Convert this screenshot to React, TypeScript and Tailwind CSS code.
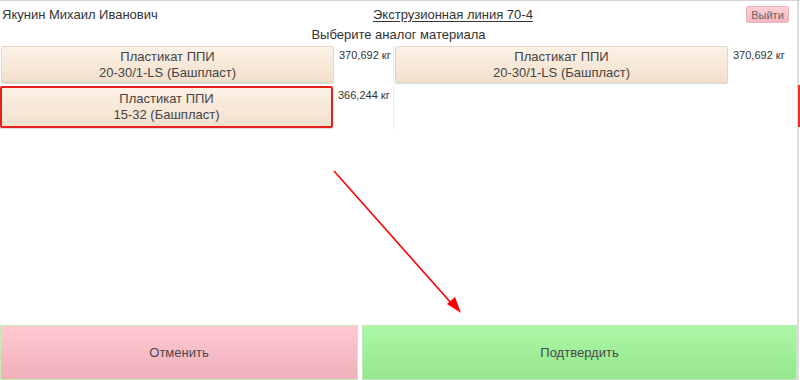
import React from 'react';

const materials = [
  { id: 1, name: 'Пластикат ППИ', grade: '20-30/1-LS (Башпласт)', weight: '370,692 кг', selected: false },
  { id: 2, name: 'Пластикат ППИ', grade: '20-30/1-LS (Башпласт)', weight: '370,692 кг', selected: false },
  { id: 3, name: 'Пластикат ППИ', grade: '15-32 (Башпласт)', weight: '366,244 кг', selected: true },
];

function MaterialCell({ m }: { m: (typeof materials)[number] }) {
  return (
    <div className="flex items-start">
      <button
        className={`w-[333px] flex flex-col items-center justify-center rounded-[2px] bg-gradient-to-b from-[#fcf1e6] to-[#f2e0cc] text-[13px] leading-[16px] text-[#444] shadow-[0_1px_1px_rgba(0,0,0,0.15)] ${
          m.selected ? 'h-[42px] border-2 border-[#e8201c]' : 'h-[37px] border border-[#e2d6c6]'
        }`}
      >
        <span>{m.name}</span>
        <span>{m.grade}</span>
      </button>
      <span className="ml-[5px] mt-[1px] text-[11px] text-[#333]">{m.weight}</span>
    </div>
  );
}

export default function App() {
  return (
    <div
      className="relative w-[800px] h-[380px] overflow-hidden bg-white border-t border-[#d4d4d4]"
      style={{ fontFamily: '"Liberation Sans", Arial, sans-serif' }}
    >
      <div className="w-[799px] h-full flex flex-col border-r-2 border-[#dcdcdc]">
        <div className="flex items-center h-[26px] pl-[2px] pr-[8px] pt-[1px]">
          <div className="w-[371px] text-[13px] text-[#333]">Якунин Михаил Иванович</div>
          <div className="text-[13px] text-[#333] underline underline-offset-2">Экструзионная линия 70-4</div>
          <button className="ml-auto w-[43px] h-[17px] rounded-[2px] border border-[#e8b4bc] bg-gradient-to-b from-[#fdd0d7] to-[#f3b7c1] text-[11px] text-[#666]">
            Выйти
          </button>
        </div>
        <div className="text-center text-[13px] text-[#333] leading-[16px]">Выберите аналог материала</div>
        <div className="grid grid-cols-[394px_1fr] mt-[3px]">
          <div className="flex flex-col gap-[3px] pl-[1px] border-r border-[#eeeeee] pb-[1px]">
            <MaterialCell m={materials[0]} />
            <div className="-ml-[1px]">
              <MaterialCell m={materials[2]} />
            </div>
          </div>
          <div className="pl-[1px]">
            <MaterialCell m={materials[1]} />
          </div>
        </div>
        <div className="flex-1" />
        <div className="flex gap-[4px] h-[55px]">
          <button className="w-[358px] h-full border border-[#c8ecb4] bg-gradient-to-b from-[#ffc9d3] to-[#efb0bb] text-[13px] text-[#4a4a4a]">
            Отменить
          </button>
          <button className="flex-1 h-full border border-[#c4e6bc] bg-gradient-to-b from-[#abf7a5] to-[#95e78e] text-[13px] text-[#4a4a4a]">
            Подтвердить
          </button>
        </div>
      </div>
      <div className="absolute right-0 top-[84px] w-[2px] h-[42px] bg-[#e8302c]" />
      <svg className="absolute left-0 top-0 pointer-events-none" width="800" height="380">
        <line x1="334" y1="170" x2="452" y2="303" stroke="#ff0000" strokeWidth="1.6" />
        <polygon points="461,312 447,303 455,296" fill="#ff0000" />
      </svg>
    </div>
  );
}
